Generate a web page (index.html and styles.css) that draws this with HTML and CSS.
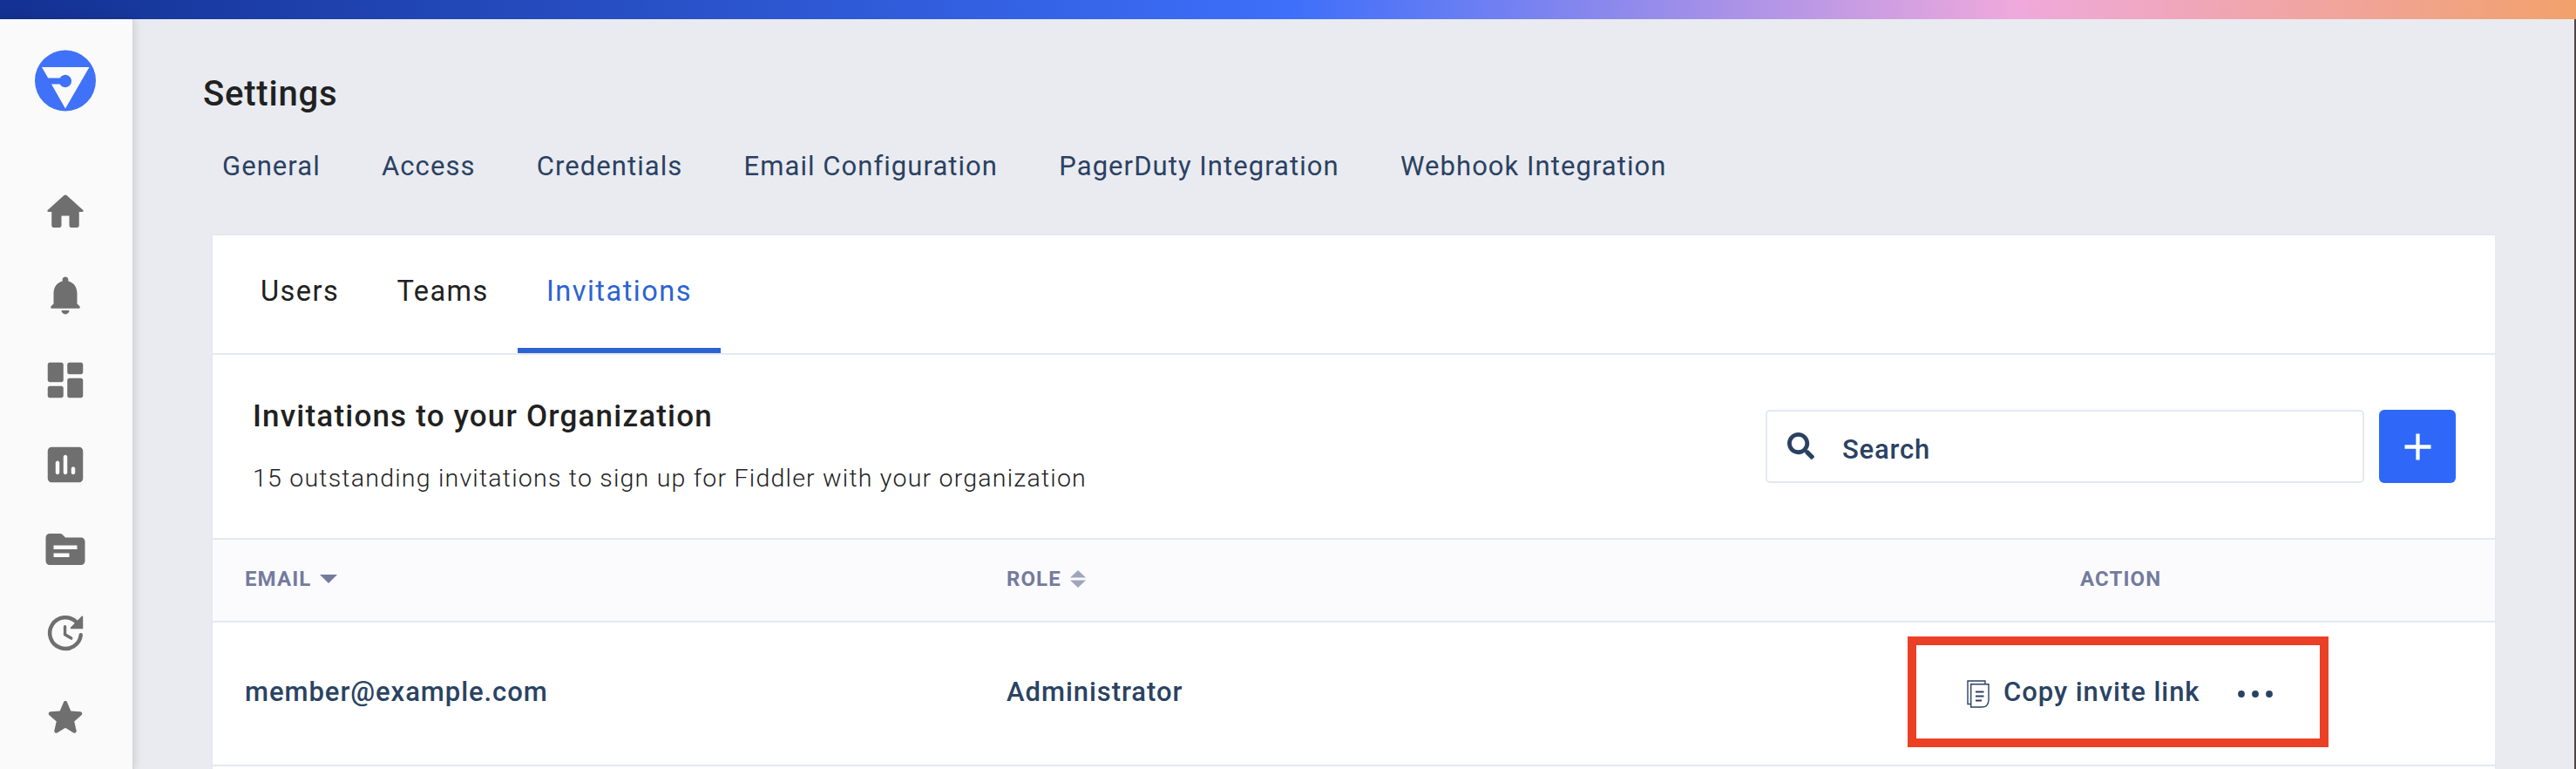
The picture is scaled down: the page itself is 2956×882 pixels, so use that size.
FILE: index.html
```html
<!DOCTYPE html>
<html lang="en">
<head>
<meta charset="utf-8">
<title>Settings</title>
<link rel="stylesheet" href="styles.css">
</head>
<body>
<div class="brand-bar"></div>
<div class="app">
  <nav class="rail">
    <svg class="logo" viewBox="0 0 70 70"><circle cx="35" cy="35" r="35" fill="#3f72f8"/><path d="M8 19.500H62.500L35 67L19 39H28.600A7.200 7.200 0 1 0 28.600 32H15.200Z" fill="#fafafa"/></svg>
    <div class="rail-items">
      <svg class="rail-icon" viewBox="0 0 24 24"><path d="M10 19v-5h4v5c0 .55.45 1 1 1h3c.55 0 1-.45 1-1v-7h1.700c.46 0 .68-.57.33-.87L12.670 3.600c-.38-.34-.96-.34-1.340 0l-8.360 7.530c-.34.3-.13.87.33.87H5v7c0 .55.45 1 1 1h3c.55 0 1-.45 1-1z"/></svg>
      <svg class="rail-icon" viewBox="0 0 24 24"><path d="M10 19.600h4c0 1.100-.9 1.900-2 1.900s-2-.8-2-1.900zM19.200 17.300 18 16.200V11c0-3.070-1.630-5.640-4.500-6.320V3.900c0-.83-.67-1.500-1.500-1.500s-1.500.67-1.500 1.500v.78C7.640 5.360 6 7.920 6 11v5.200l-1.200 1.100c-.5.500-.3 1.200.3 1.200h13.800c.6 0 .85-.7.300-1.200z"/></svg>
      <svg class="rail-icon" viewBox="0 0 24 24"><path d="M4 13h6c.55 0 1-.45 1-1V4c0-.55-.45-1-1-1H4c-.55 0-1 .45-1 1v8c0 .55.45 1 1 1zm0 8h6c.55 0 1-.45 1-1v-4c0-.55-.45-1-1-1H4c-.55 0-1 .45-1 1v4c0 .55.45 1 1 1zm10 0h6c.55 0 1-.45 1-1v-8c0-.55-.45-1-1-1h-6c-.55 0-1 .45-1 1v8c0 .55.45 1 1 1zM13 4v4c0 .55.45 1 1 1h6c.55 0 1-.45 1-1V4c0-.55-.45-1-1-1h-6c-.55 0-1 .45-1 1z"/></svg>
      <svg class="rail-icon" viewBox="0 0 24 24"><path d="M19 3H5c-1.100 0-2 .9-2 2v14c0 1.100.9 2 2 2h14c1.100 0 2-.9 2-2V5c0-1.100-.9-2-2-2zM8 17c-.55 0-1-.45-1-1v-5c0-.55.45-1 1-1s1 .45 1 1v5c0 .55-.45 1-1 1zm4 0c-.55 0-1-.45-1-1V8c0-.55.45-1 1-1s1 .45 1 1v8c0 .55-.45 1-1 1zm4 0c-.55 0-1-.45-1-1v-2c0-.55.45-1 1-1s1 .45 1 1v2c0 .55-.45 1-1 1z"/></svg>
      <svg class="rail-icon" viewBox="0 0 24 24"><path d="M20 6h-8l-1.400-1.400c-.4-.4-.9-.6-1.400-.6H4c-1.100 0-2 .9-2 2v12c0 1.100.9 2 2 2h16c1.100 0 2-.9 2-2V8c0-1.100-.9-2-2-2zm-6 10H6v-2h8v2zm4-4H6v-2h12v2z"/></svg>
      <svg class="rail-icon" viewBox="0 0 24 24"><path d="M19.900 13A7.950 7.950 0 1 1 17.600 6.400" fill="none" stroke="#6f6f6f" stroke-width="2" stroke-linecap="round"/><path d="M21 3.900v6h-6c-.5 0-.6-.5-.3-.8l5.500-5.500c.4-.4.800-.2.800.3z"/><path d="M11.800 8.700v4.100l3.200 1.900" fill="none" stroke="#6f6f6f" stroke-width="1.500" stroke-linecap="round"/></svg>
      <svg class="rail-icon" viewBox="0 0 24 24"><path d="M12 17.270l4.150 2.510c.76.460 1.690-.22 1.490-1.080l-1.100-4.720 3.670-3.180c.67-.58.31-1.680-.57-1.750l-4.830-.41-1.890-4.460c-.34-.81-1.500-.81-1.840 0L9.190 8.630l-4.830.41c-.88.07-1.240 1.170-.57 1.750l3.670 3.180-1.100 4.720c-.2.860.73 1.540 1.490 1.080L12 17.270z"/></svg>
    </div>
  </nav>
  <main class="content">
    <h1 class="page-title">Settings</h1>
    <div class="section-nav">
      <a>General</a><a>Access</a><a>Credentials</a><a>Email Configuration</a><a>PagerDuty Integration</a><a>Webhook Integration</a>
    </div>
    <section class="card">
      <div class="tabs">
        <a class="tab">Users</a><a class="tab">Teams</a><a class="tab active">Invitations</a>
      </div>
      <div class="toolbar">
        <div class="heading">
          <h2>Invitations to your Organization</h2>
          <p>15 outstanding invitations to sign up for Fiddler with your organization</p>
        </div>
        <div class="search">
          <svg class="search-icon" viewBox="0 0 512 512"><path d="M505 442.700L405.300 343c-4.500-4.500-10.600-7-17-7H372c27.600-35.300 44-79.700 44-128C416 93.100 322.900 0 208 0S0 93.100 0 208s93.100 208 208 208c48.300 0 92.700-16.400 128-44v16.300c0 6.400 2.500 12.500 7 17l99.700 99.700c9.400 9.400 24.600 9.400 33.900 0l28.300-28.300c9.400-9.400 9.400-24.600.1-34zM208 336c-70.700 0-128-57.200-128-128 0-70.700 57.200-128 128-128 70.700 0 128 57.200 128 128 0 70.700-57.200 128-128 128z"/></svg>
          <span>Search</span>
        </div>
        <button class="add"><svg viewBox="0 0 32 32"><path d="M16 .5v31M.5 16h31" stroke="#fff" stroke-width="4.400"/></svg></button>
      </div>
      <div class="row head">
        <div class="cell">EMAIL<svg class="sort-down" viewBox="0 0 20 10"><path d="M0 0H20L10 10Z"/></svg></div>
        <div class="cell">ROLE<svg class="sort-both" viewBox="0 0 18 20"><path d="M0 8.500H18L9 0ZM0 11.500H18L9 20Z"/></svg></div>
        <div class="cell action">ACTION</div>
      </div>
      <div class="row body">
        <div class="cell">member@example.com</div>
        <div class="cell">Administrator</div>
        <div class="cell action">
          <div class="highlight">
            <svg class="copy" viewBox="0 0 26 32"><g fill="none" stroke="#2a4363" stroke-width="1.400"><path d="M4.500 27.500H1V1H21V4.500"/><path d="M4.700 4.700H25V23.500Q24.500 31 17 31H4.700Z"/></g><path d="M10 13.500H19.500M10 18.500H19.500M10 23.500H17" stroke="#2a4363" stroke-width="1.900"/></svg>
            <span>Copy invite link</span>
            <svg class="dots" viewBox="0 0 40 8"><circle cx="4" cy="4" r="3.900"/><circle cx="20" cy="4" r="3.900"/><circle cx="36" cy="4" r="3.900"/></svg>
          </div>
        </div>
      </div>
      <div class="row next"></div>
    </section>
  </main>
  <div class="edge"></div>
</div>
</body>
</html>
```
FILE: styles.css
```css
* { box-sizing: border-box; }
body { margin: 0; height: 882px; overflow: hidden; display: flex; flex-direction: column; background: #e9ebf0; font-family: Roboto, "Liberation Sans", sans-serif; color: #212121; }
h1, h2, p { margin: 0; font-weight: 500; }
.brand-bar { flex: none; height: 22px; background: linear-gradient(90deg, #133192 0%, #3d6ffa 50%, #efa9dc 78.300%, #f2a16b 100%); }
.app { flex: 1; min-height: 0; display: flex; }
.rail { flex: none; width: 154px; background: #fafafa; padding-top: 35px; border-right: 2px solid #d9d9d9; box-shadow: 0 0 10px rgba(0,0,0,.14); }
.logo { display: block; width: 70px; height: 71px; margin-left: 40px; }
.rail-items { display: flex; flex-direction: column; gap: 42.800px; padding: 87.500px 0 0 47.500px; }
.rail-icon { display: block; flex: none; width: 54px; height: 54px; fill: #6f6f6f; }
.content { flex: 1; display: flex; flex-direction: column; padding: 62px 90px 0 81px; }
.page-title { flex: none; font-size: 40px; line-height: 48px; font-weight: 500; letter-spacing: .800px; margin-left: -2px; }
.section-nav { flex: none; display: flex; gap: 70.300px; padding-left: 20px; margin-top: 19px; height: 117px; font-size: 31px; line-height: 80px; letter-spacing: 1.050px; color: #2b4162; }
.card { flex: 1; min-height: 0; background: #fff; border: 2px solid #e5e8f3; border-bottom: 0; border-right-width: 1px; margin-left: 7px; }
.tabs { display: flex; height: 137px; padding-left: 22px; border-bottom: 2px solid #e5e8f3; font-size: 32.500px; line-height: 128px; letter-spacing: 1.500px; }
.tab { padding: 0 33px; }
.tab.active { color: #2c63d1; border-bottom: 6px solid #2c63d1; }
.toolbar { display: flex; height: 210px; padding: 0 45px 0 46px; }
.heading { flex: 1; padding-top: 46px; }
.heading h2 { font-size: 35px; line-height: 50px; letter-spacing: 1.200px; font-weight: 500; }
.heading p { font-size: 28.500px; line-height: 40px; letter-spacing: 1.220px; font-weight: 300; margin-top: 26px; }
.search { display: flex; align-items: center; width: 687px; height: 84px; margin-top: 63px; border: 2px solid #e5e8f3; border-radius: 5px; padding-left: 23px; gap: 32px; font-size: 31px; letter-spacing: .800px; font-weight: 500; color: #2b4162; }
.search-icon { width: 31px; height: 31px; fill: #2b4162; margin-top: -1px; }
.search span { margin-top: 6px; }
.add { display: flex; align-items: center; justify-content: center; width: 88px; height: 84px; margin: 63px 0 0 17px; border: 0; border-radius: 6px; background: #2f68f8; padding: 0; }
.add svg { width: 31px; height: 31px; }
.row { display: grid; grid-template-columns: 874px 874px 1fr; border-top: 2px solid #e5e8f3; padding-left: 37px; }
.cell { display: flex; align-items: center; }
.head { height: 95px; background: #fbfbfd; font-size: 24px; font-weight: 700; letter-spacing: 1.100px; color: #747b9d; padding-bottom: 4px; }
.head .action { padding-left: 358px; }
.sort-down { width: 20px; height: 10px; fill: #747b9d; margin-left: 10px; }
.sort-both { width: 18px; height: 20px; fill: #9fa5bd; margin-left: 10px; }
.body { height: 165px; padding-bottom: 4px; font-size: 31px; font-weight: 500; letter-spacing: .950px; color: #2a4363; }
.body .action { padding-left: 160px; }
.highlight { display: flex; align-items: center; width: 483px; height: 127px; border: 10px solid #eb4025; padding-left: 58px; }
.copy { width: 26px; height: 32px; margin-top: 5px; }
.highlight span { margin-left: 16px; white-space: nowrap; }
.dots { width: 40px; height: 8px; fill: #2a4363; margin: 4px 0 0 44px; }
.edge { flex: none; width: 2px; background: #514543; }
```
